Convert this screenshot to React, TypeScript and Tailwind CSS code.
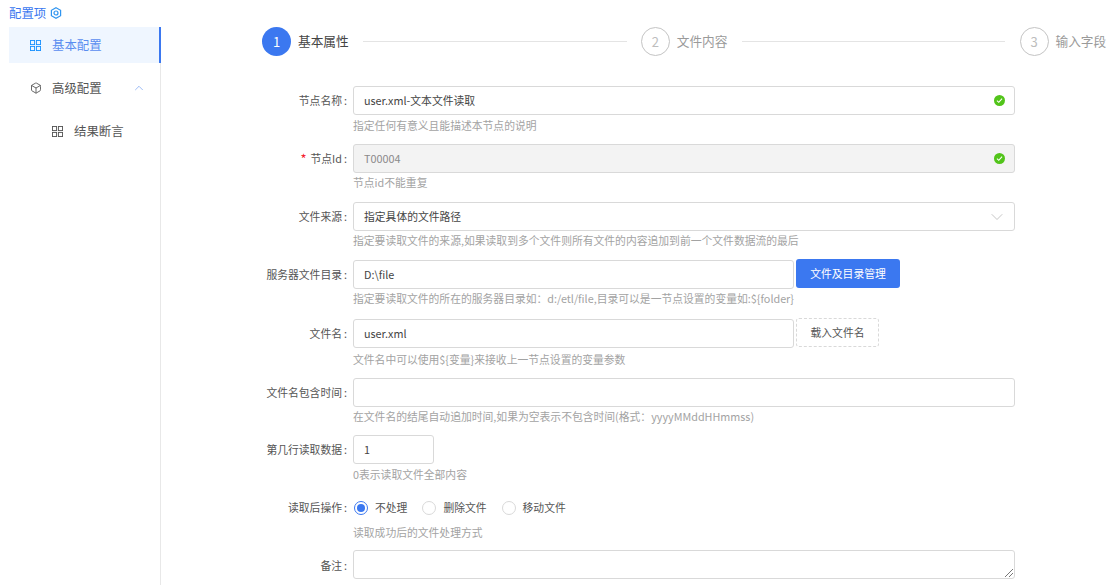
import type { ReactNode } from "react";
import { ChevronDown, ChevronUp, Box } from "lucide-react";

const font = { fontFamily: '"Noto Sans CJK SC", "Noto Sans", sans-serif' };

function GridIcon({ className }: { className: string }) {
  return (
    <svg viewBox="0 0 12 12" className={className} fill="none" stroke="currentColor" strokeWidth="1">
      <rect x="0.5" y="0.5" width="4.5" height="4.5" />
      <rect x="7" y="0.5" width="4.5" height="4.5" />
      <rect x="0.5" y="7" width="4.5" height="4.5" />
      <rect x="7" y="7" width="4.5" height="4.5" />
    </svg>
  );
}

function CheckIcon() {
  return (
    <svg viewBox="0 0 12 12" className="w-[11px] h-[11px]">
      <circle cx="6" cy="6" r="6" fill="#52c41a" />
      <path d="M3.2 6.2 5.2 8 8.8 4" fill="none" stroke="#fff" strokeWidth="1.2" />
    </svg>
  );
}

function Step({ num, title, active }: { num: number; title: string; active?: boolean }) {
  return (
    <div className="flex items-center shrink-0">
      <div
        className={
          active
            ? "w-[29px] h-[29px] rounded-full bg-[#3b78f0] text-white flex items-center justify-center text-[13px]"
            : "w-[29px] h-[29px] rounded-full border border-[#c4c4c4] text-[#bdbdbd] flex items-center justify-center text-[13px]"
        }
      >
        {num}
      </div>
      <span className={active ? "ml-[7px] pb-[2px] text-[12.7px] text-[#444]" : "ml-[7px] pb-[2px] text-[12.7px] text-[#9a9a9a]"}>{title}</span>
    </div>
  );
}

function Help({ className, children }: { className: string; children: ReactNode }) {
  return <div className={`h-[17px] leading-[17px] text-[10.8px] text-[#a3a3a3] whitespace-nowrap ${className}`}>{children}</div>;
}

function Field({ label, required, help, helpClass, labelClass, children, className }: { label: string; required?: boolean; help?: string; helpClass?: string; labelClass?: string; children: ReactNode; className?: string }) {
  return (
    <div className={`flex ${className ?? ""}`}>
      <div className={`w-[192px] h-[29px] flex items-center justify-end pr-[6px] text-[10.8px] text-[#555] whitespace-nowrap ${labelClass ?? ""}`}>
        {required && <span className="text-[#f5222d] text-[13px] mr-[4px]">*</span>}
        {label}
        <span className="ml-[2px]">:</span>
      </div>
      <div className="flex-1 min-w-0">
        {children}
        {help && <Help className={helpClass ?? "mt-[1px]"}>{help}</Help>}
      </div>
    </div>
  );
}

function TextBox({ value, check, disabled, className }: { value?: string; check?: boolean; disabled?: boolean; className?: string }) {
  return (
    <div
      className={`h-[29px] border border-[#d9d9d9] rounded-[3px] flex items-center justify-between pl-[10px] pr-[9px] text-[10.8px] ${
        disabled ? "bg-[#f3f3f3] text-[#8a8a8a]" : "bg-white text-[#444]"
      } ${className ?? "w-[662px]"}`}
    >
      <span>{value}</span>
      {check && <CheckIcon />}
    </div>
  );
}

function Radio({ label, checked }: { label: string; checked?: boolean }) {
  return (
    <div className="flex items-center mr-[15px]">
      <span className={checked ? "w-[14px] h-[14px] rounded-full border border-[#3b78f0] flex items-center justify-center" : "w-[14px] h-[14px] rounded-full border border-[#d9d9d9]"}>
        {checked && <span className="w-[8px] h-[8px] rounded-full bg-[#3b78f0]" />}
      </span>
      <span className="ml-[7px] text-[10.8px] text-[#555]">{label}</span>
    </div>
  );
}

export default function App() {
  return (
    <div className="w-[1113px] h-[585px] overflow-hidden bg-white flex" style={font}>
      <aside className="w-[161px] shrink-0 pl-[9px]">
        <div className="h-[23px] flex items-center text-[12.4px] text-[#3b78f0] pt-[3px]">
          配置项
          <svg viewBox="0 0 12 12" className="w-[12px] h-[12px] ml-[4px] text-[#2f95f0]" fill="none" stroke="currentColor" strokeWidth="1.2">
            <path d="M6 .7 10.6 3.300v5.400L6 11.300 1.400 8.700V3.300Z" />
            <circle cx="6" cy="6" r="2" />
          </svg>
        </div>
        <div className="border-r border-[#e8e8e8] h-[562px]">
          <div className="h-[36px] mt-[4px] bg-[#eff6ff] border-r-2 border-[#3b78f0] -mr-px flex items-center pl-[21px] text-[12.4px] text-[#5a8df0]">
            <GridIcon className="w-[11px] h-[11px] text-[#1890ff]" />
            <span className="ml-[11px]">基本配置</span>
          </div>
          <div className="h-[36px] mt-[7px] flex items-center pl-[21px] text-[12.4px] text-[#555]">
            <Box className="w-[12px] h-[12px]" strokeWidth={1.75} />
            <span className="ml-[10px]">高级配置</span>
            <ChevronUp className="w-[14px] h-[14px] ml-[30px] text-[#5a8df0]" strokeWidth={1} />
          </div>
          <div className="h-[36px] mt-[7px] flex items-center pl-[43px] text-[12.4px] text-[#555]">
            <GridIcon className="w-[11px] h-[11px] text-[#555]" />
            <span className="ml-[11px]">结果断言</span>
          </div>
        </div>
      </aside>
      <main className="flex-1 min-w-0">
        <div className="flex items-center h-[29px] mt-[27px] ml-[101px]">
          <Step num={1} title="基本属性" active />
          <div className="w-[264px] h-px bg-[#e4e4e4] ml-[14px] mr-[14px]" />
          <Step num={2} title="文件内容" />
          <div className="w-[263px] h-px bg-[#e4e4e4] ml-[14px] mr-[15px]" />
          <Step num={3} title="输入字段" />
        </div>
        <div className="mt-[30px]">
          <Field label="节点名称" help="指定任何有意义且能描述本节点的说明" helpClass="mt-[2px]">
            <TextBox value="user.xml-文本文件读取" check />
          </Field>
          <Field label="节点Id" required help="节点id不能重复" className="mt-[10px]">
            <TextBox value="T00004" check disabled />
          </Field>
          <Field label="文件来源" help="指定要读取文件的来源,如果读取到多个文件则所有文件的内容追加到前一个文件数据流的最后" className="mt-[11px]">
            <div className="w-[662px] h-[29px] border border-[#d9d9d9] rounded-[3px] flex items-center justify-between pl-[10px] pr-[7px] text-[10.8px] text-[#444]">
              <span>指定具体的文件路径</span>
              <ChevronDown className="w-[20px] h-[20px] text-[#bbb]" strokeWidth={1} />
            </div>
          </Field>
          <Field label="服务器文件目录" help="指定要读取文件的所在的服务器目录如：d:/etl/file,目录可以是一节点设置的变量如:${folder}" className="mt-[11px]">
            <div className="flex items-start">
              <TextBox value="D:\file" className="w-[441px]" />
              <button className="ml-[2px] -mt-px w-[104px] h-[29px] rounded-[3px] bg-[#3b78f0] text-white text-[10.8px]">文件及目录管理</button>
            </div>
          </Field>
          <Field label="文件名" help="文件名中可以使用${变量}来接收上一节点设置的变量参数" helpClass="mt-[3px]" labelClass="pt-[2px]" className="mt-[11px]">
            <div className="flex items-start">
              <TextBox value="user.xml" className="w-[441px] mt-px" />
              <button className="ml-[2px] w-[83px] h-[29px] rounded-[3px] border border-dashed border-[#d9d9d9] text-[#555] text-[10.8px]">载入文件名</button>
            </div>
          </Field>
          <Field label="文件名包含时间" help="在文件名的结尾自动追加时间,如果为空表示不包含时间(格式：yyyyMMddHHmmss)" className="mt-[10px]">
            <TextBox />
          </Field>
          <Field label="第几行读取数据" help="0表示读取文件全部内容" helpClass="mt-[2px]" className="mt-[10px]">
            <TextBox value="1" className="w-[81px]" />
          </Field>
          <Field label="读取后操作" className="mt-[10px]">
            <div className="h-[29px] flex items-center pl-px">
              <Radio label="不处理" checked />
              <Radio label="删除文件" />
              <Radio label="移动文件" />
            </div>
            <Help className="mt-[2px]">读取成功后的文件处理方式</Help>
          </Field>
          <Field label="备注" labelClass="pt-[2px]" className="mt-[9px]">
            <div className="relative w-[662px] h-[29px] border border-[#d9d9d9] rounded-[3px]">
              <svg viewBox="0 0 8 8" className="absolute right-px bottom-px w-[8px] h-[8px] text-[#555]" fill="none" stroke="currentColor" strokeWidth="0.8">
                <path d="M0 8 8 0M4 8l4-4" />
              </svg>
            </div>
          </Field>
        </div>
      </main>
    </div>
  );
}
